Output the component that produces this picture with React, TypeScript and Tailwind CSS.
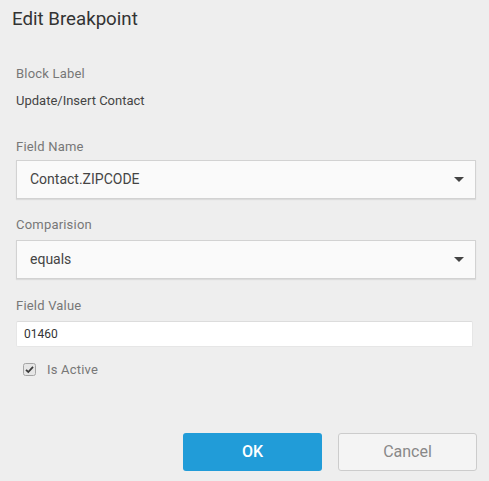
export default function App() {
  return (
    <div className="w-[489px] h-[481px] bg-[#eeeeee] flex flex-col font-['Roboto',sans-serif] overflow-hidden">
      {/* Header */}
      <h1 className="pt-[7px] pl-[12px] text-[18.7px] leading-[24px] text-[#333333] font-normal">
        Edit Breakpoint
      </h1>

      {/* Form */}
      <div className="flex flex-col px-4">
        <div className="mt-[35px] text-[13px] leading-[16px] text-[#777777] tracking-[0.2px]">Block Label</div>
        <div className="mt-[11px] text-[13px] leading-[16px] text-[#444444]">Update/Insert Contact</div>

        <div className="mt-[30px] text-[13px] leading-[16px] text-[#777777] tracking-[0.2px]">Field Name</div>
        <div className="mt-[5px] h-[39px] w-[460px] flex items-center justify-between bg-[#fafafa] border border-[#d2d2d2] shadow-[0_1px_1px_rgba(0,0,0,0.08)] pl-[13px] pr-[11px]">
          <span className="text-[14px] text-[#444444]">Contact.ZIPCODE</span>
          <svg width="10" height="5" viewBox="0 0 10 5">
            <path d="M0 0H10L5 5Z" fill="#444444" />
          </svg>
        </div>

        <div className="mt-[18px] text-[13px] leading-[16px] text-[#777777] tracking-[0.2px]">Comparision</div>
        <div className="mt-[7px] h-[39px] w-[460px] flex items-center justify-between bg-[#fafafa] border border-[#d2d2d2] shadow-[0_1px_1px_rgba(0,0,0,0.08)] pl-[13px] pr-[11px]">
          <span className="text-[14px] text-[#444444]">equals</span>
          <svg width="10" height="5" viewBox="0 0 10 5">
            <path d="M0 0H10L5 5Z" fill="#444444" />
          </svg>
        </div>

        <div className="mt-[19px] text-[13px] leading-[16px] text-[#777777] tracking-[0.2px]">Field Value</div>
        <div className="mt-[7px] h-[26px] w-[457px] flex items-center bg-white border border-[#e6e6e6] border-t-[#dcdcdc] rounded-[2px] px-[7px]">
          <span className="text-[12px] text-[#333333]">01460</span>
        </div>

        <label className="mt-[16px] ml-[7px] flex items-center gap-[11px] h-[13px]">
          <svg width="13" height="13" viewBox="0 0 13 13">
            <rect x="0.5" y="0.5" width="12" height="12" rx="2" fill="#e6e6e6" stroke="#a5a5a5" />
            <path d="M3 6.8L5.3 9L10 3.8" fill="none" stroke="#3a3a3a" strokeWidth="1.8" />
          </svg>
          <span className="text-[13px] text-[#777777] tracking-[0.2px]">Is Active</span>
        </label>
      </div>

      {/* Footer */}
      <div className="mt-auto mb-[10px] flex justify-end gap-[16px] pr-[12px]">
        <button className="w-[139px] h-[38px] rounded-[3px] bg-[#219cd8] text-white text-[16px] font-medium">
          OK
        </button>
        <button className="w-[139px] h-[38px] rounded-[3px] bg-[#f4f4f4] border border-[#cccccc] text-[#888888] text-[16px]">
          Cancel
        </button>
      </div>
    </div>
  );
}
